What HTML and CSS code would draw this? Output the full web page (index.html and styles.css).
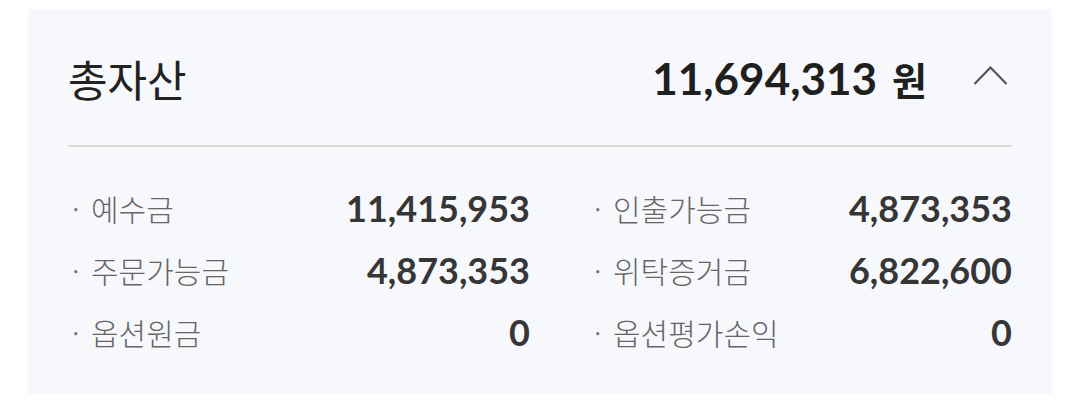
FILE: index.html
```html
<!DOCTYPE html>
<html lang="ko">
<head>
<meta charset="utf-8">
<link rel="stylesheet" href="styles.css">
</head>
<body>
<section class="card">
  <header class="head">
    <h1 class="title">총자산</h1>
    <div class="total">
      <span class="total-num">11,694,313</span>
      <span class="total-unit">원</span>
    </div>
    <svg class="chev" width="36" height="20" viewBox="0 0 36 20" aria-hidden="true">
      <polyline points="1.5,18 17.5,1.5 33.5,18" fill="none" stroke="#555" stroke-width="2.2"/>
    </svg>
  </header>
  <div class="grid">
    <div class="row"><span class="label">예수금</span><span class="val">11,415,953</span></div>
    <div class="row"><span class="label">인출가능금</span><span class="val">4,873,353</span></div>
    <div class="row"><span class="label">주문가능금</span><span class="val">4,873,353</span></div>
    <div class="row"><span class="label">위탁증거금</span><span class="val">6,822,600</span></div>
    <div class="row"><span class="label">옵션원금</span><span class="val">0</span></div>
    <div class="row"><span class="label">옵션평가손익</span><span class="val">0</span></div>
  </div>
</section>
</body>
</html>
```
FILE: styles.css
```css
html, body {
  margin: 0;
  padding: 0;
  background: #ffffff;
}
body {
  font-family: "Noto Sans CJK KR", "Noto Sans", sans-serif;
}
.card {
  margin: 9px 28px 0;
  height: 385px;
  box-sizing: border-box;
  background: #f7f8fb;
  padding: 0 40px;
}
.head {
  display: flex;
  align-items: center;
  height: 138px;
  padding-top: 2px;
  box-sizing: border-box;
  border-bottom: 2px solid #dcdbd8;
}
.title {
  margin: 0;
  flex: 1;
  font-size: 43px;
  font-weight: 400;
  color: #222;
}
.total {
  display: flex;
  align-items: baseline;
  gap: 15px;
  color: #1f1f1f;
}
.total-num {
  font-family: Lato, "Liberation Sans", sans-serif;
  font-weight: 700;
  font-size: 44px;
}
.total-unit {
  font-family: "Noto Sans CJK KR", sans-serif;
  font-weight: 700;
  font-size: 38px;
}
.chev {
  margin-left: 46px;
  margin-right: 3px;
  margin-top: -4px;
}
.grid {
  display: grid;
  grid-template-columns: 462px 422px;
  column-gap: 60px;
  padding-top: 30px;
}
.row {
  display: flex;
  align-items: center;
  justify-content: space-between;
  height: 62px;
}
.label {
  font-size: 30px;
  font-weight: 300;
  color: #666;
}
.label::before {
  content: "·";
  display: inline-block;
  width: 23px;
  text-indent: 4px;
  color: #777;
}
.val {
  font-family: Lato, "Liberation Sans", sans-serif;
  font-weight: 700;
  font-size: 36px;
  color: #363636;
}
```
